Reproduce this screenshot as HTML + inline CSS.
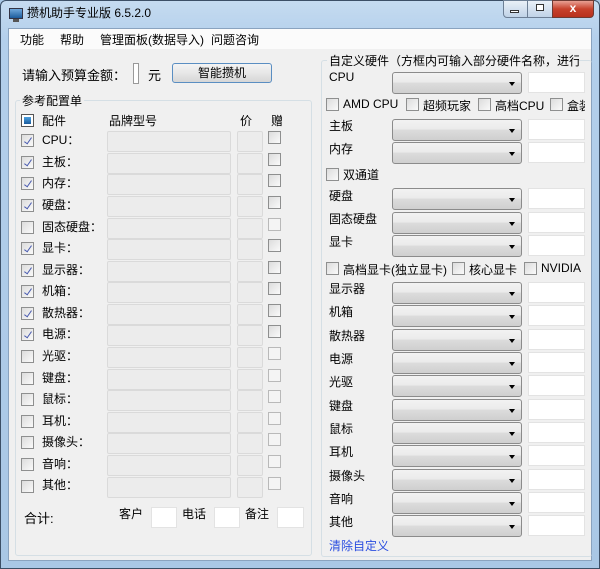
<!DOCTYPE html>
<html><head><meta charset="utf-8"><style>
*{margin:0;padding:0;box-sizing:border-box}
body{width:600px;height:569px;overflow:hidden;background:#a9c8e6;font-family:"Liberation Sans","Noto Sans CJK SC",sans-serif;font-size:12px;color:#000;position:relative}
.a{position:absolute}
.frame{left:0;top:0;width:600px;height:569px;background:linear-gradient(#c5dbf0,#b3cfeb 40px,#a9c7e5);border:1px solid #3c4f66;border-radius:6px 6px 0 0}
.client{left:8px;top:28px;width:584px;height:533px;background:#f0f0f0;border:1px solid #8aa3bf}
.menu{left:9px;top:29px;width:582px;height:20px;background:#fbfbfb}
.grp{border:1px solid #d5dfe5;border-radius:3px}
.lbl{background:#f0f0f0;padding:0 2px}
.cb{width:13px;height:13px;border:1px solid #8e8f8f;background:linear-gradient(135deg,#dcdcdc,#fafafa)}
.cb.d{border-color:#b9b9b9;background:#f4f4f4}
.cb.k::after{content:"";position:absolute;left:4px;top:1px;width:3px;height:7px;border:solid #4a5cb0;border-width:0 1.5px 1.5px 0;transform:rotate(35deg)}
.box{border:1px solid #dadada;background:#ececec;border-radius:2px}
.cmb{width:130px;height:22px;border:1px solid #8b8b8b;border-radius:3px;background:linear-gradient(#f2f2f2,#ebebeb 45%,#dcdcdc 50%,#cfcfcf)}
.cmb::after{content:"";position:absolute;right:6px;top:9px;border-left:3.5px solid transparent;border-right:3.5px solid transparent;border-top:4px solid #000}
.tb{width:57px;height:21px;background:#fff;border:1px solid #e3e3e3}
</style></head><body>
<div class="a frame"></div>
<div class="a" style="left:9px;top:8px;width:14px;height:11px;background:linear-gradient(#6fa8dc,#1c5c9c);border:1px solid #334"></div>
<div class="a" style="left:13px;top:19px;width:6px;height:3px;background:#555"></div>
<div class="a" style="left:27px;top:4px;font-size:12px">攒机助手专业版 6.5.2.0</div>
<div class="a" style="left:503px;top:0;width:25px;height:18px;background:linear-gradient(#e9f0f8,#c0d3e8);border:1px solid #6d7f95;border-radius:0 0 0 4px"></div>
<div class="a" style="left:510px;top:10px;width:9px;height:3px;border:1px solid #333;background:#fff"></div>
<div class="a" style="left:527px;top:0;width:26px;height:18px;background:linear-gradient(#e9f0f8,#c0d3e8);border:1px solid #6d7f95"></div>
<div class="a" style="left:536px;top:4px;width:8px;height:7px;border:1px solid #333;background:#fff"></div>
<div class="a" style="left:552px;top:0;width:42px;height:18px;background:linear-gradient(#e8a093,#c7412c 50%,#b8311d);border:1px solid #6d3a33;border-radius:0 0 4px 0;color:#fff;font-weight:bold;text-align:center;font-size:12px;line-height:15px">x</div>
<div class="a client"></div>
<div class="a menu"></div>
<div class="a" style="left:20px;top:31px">功能</div>
<div class="a" style="left:60px;top:31px">帮助</div>
<div class="a" style="left:100px;top:31px">管理面板(数据导入)</div>
<div class="a" style="left:211px;top:31px">问题咨询</div>
<div class="a" style="left:22px;top:65px;font-size:13px">请输入预算金额：</div>
<div class="a" style="left:133px;top:63px;width:6px;height:21px;border:1px solid #999;background:#fff"></div>
<div class="a" style="left:148px;top:65px;font-size:13px">元</div>
<div class="a" style="left:172px;top:63px;width:100px;height:20px;border:1px solid #5a8ec2;border-radius:3px;background:linear-gradient(#f4f4f4,#e7e7e7 50%,#d6d6d6);text-align:center;line-height:18px">智能攒机</div>

<div class="a grp" style="left:15px;top:100px;width:297px;height:456px"></div>
<div class="a lbl" style="left:20px;top:92px">参考配置单</div>
<div class="a cb" style="left:21px;top:114px;border-color:#555;background:#fff"><div class="a" style="left:2px;top:2px;width:7px;height:7px;background:linear-gradient(#4aa0e0,#1c5c9c)"></div></div>
<div class="a" style="left:42px;top:112px">配件</div>
<div class="a" style="left:109px;top:112px">品牌型号</div>
<div class="a" style="left:240px;top:112px">价</div>
<div class="a" style="left:271px;top:112px">赠</div>

<div class="a cb k" style="left:21px;top:134px"></div><div class="a" style="left:42px;top:131px">CPU：</div><div class="a box" style="left:107px;top:131px;width:124px;height:21px"></div><div class="a box" style="left:237px;top:131px;width:26px;height:21px"></div><div class="a cb" style="left:268px;top:131px"></div>
<div class="a cb k" style="left:21px;top:156px"></div><div class="a" style="left:42px;top:153px">主板：</div><div class="a box" style="left:107px;top:153px;width:124px;height:21px"></div><div class="a box" style="left:237px;top:153px;width:26px;height:21px"></div><div class="a cb" style="left:268px;top:153px"></div>
<div class="a cb k" style="left:21px;top:177px"></div><div class="a" style="left:42px;top:174px">内存：</div><div class="a box" style="left:107px;top:174px;width:124px;height:21px"></div><div class="a box" style="left:237px;top:174px;width:26px;height:21px"></div><div class="a cb" style="left:268px;top:174px"></div>
<div class="a cb k" style="left:21px;top:199px"></div><div class="a" style="left:42px;top:196px">硬盘：</div><div class="a box" style="left:107px;top:196px;width:124px;height:21px"></div><div class="a box" style="left:237px;top:196px;width:26px;height:21px"></div><div class="a cb" style="left:268px;top:196px"></div>
<div class="a cb" style="left:21px;top:221px"></div><div class="a" style="left:42px;top:218px">固态硬盘：</div><div class="a box" style="left:107px;top:218px;width:124px;height:21px"></div><div class="a box" style="left:237px;top:218px;width:26px;height:21px"></div><div class="a cb d" style="left:268px;top:218px"></div>
<div class="a cb k" style="left:21px;top:242px"></div><div class="a" style="left:42px;top:239px">显卡：</div><div class="a box" style="left:107px;top:239px;width:124px;height:21px"></div><div class="a box" style="left:237px;top:239px;width:26px;height:21px"></div><div class="a cb" style="left:268px;top:239px"></div>
<div class="a cb k" style="left:21px;top:264px"></div><div class="a" style="left:42px;top:261px">显示器：</div><div class="a box" style="left:107px;top:261px;width:124px;height:21px"></div><div class="a box" style="left:237px;top:261px;width:26px;height:21px"></div><div class="a cb" style="left:268px;top:261px"></div>
<div class="a cb k" style="left:21px;top:285px"></div><div class="a" style="left:42px;top:282px">机箱：</div><div class="a box" style="left:107px;top:282px;width:124px;height:21px"></div><div class="a box" style="left:237px;top:282px;width:26px;height:21px"></div><div class="a cb" style="left:268px;top:282px"></div>
<div class="a cb k" style="left:21px;top:307px"></div><div class="a" style="left:42px;top:304px">散热器：</div><div class="a box" style="left:107px;top:304px;width:124px;height:21px"></div><div class="a box" style="left:237px;top:304px;width:26px;height:21px"></div><div class="a cb" style="left:268px;top:304px"></div>
<div class="a cb k" style="left:21px;top:328px"></div><div class="a" style="left:42px;top:325px">电源：</div><div class="a box" style="left:107px;top:325px;width:124px;height:21px"></div><div class="a box" style="left:237px;top:325px;width:26px;height:21px"></div><div class="a cb" style="left:268px;top:325px"></div>
<div class="a cb" style="left:21px;top:350px"></div><div class="a" style="left:42px;top:347px">光驱：</div><div class="a box" style="left:107px;top:347px;width:124px;height:21px"></div><div class="a box" style="left:237px;top:347px;width:26px;height:21px"></div><div class="a cb d" style="left:268px;top:347px"></div>
<div class="a cb" style="left:21px;top:372px"></div><div class="a" style="left:42px;top:369px">键盘：</div><div class="a box" style="left:107px;top:369px;width:124px;height:21px"></div><div class="a box" style="left:237px;top:369px;width:26px;height:21px"></div><div class="a cb d" style="left:268px;top:369px"></div>
<div class="a cb" style="left:21px;top:393px"></div><div class="a" style="left:42px;top:390px">鼠标：</div><div class="a box" style="left:107px;top:390px;width:124px;height:21px"></div><div class="a box" style="left:237px;top:390px;width:26px;height:21px"></div><div class="a cb d" style="left:268px;top:390px"></div>
<div class="a cb" style="left:21px;top:415px"></div><div class="a" style="left:42px;top:412px">耳机：</div><div class="a box" style="left:107px;top:412px;width:124px;height:21px"></div><div class="a box" style="left:237px;top:412px;width:26px;height:21px"></div><div class="a cb d" style="left:268px;top:412px"></div>
<div class="a cb" style="left:21px;top:436px"></div><div class="a" style="left:42px;top:433px">摄像头：</div><div class="a box" style="left:107px;top:433px;width:124px;height:21px"></div><div class="a box" style="left:237px;top:433px;width:26px;height:21px"></div><div class="a cb d" style="left:268px;top:433px"></div>
<div class="a cb" style="left:21px;top:458px"></div><div class="a" style="left:42px;top:455px">音响：</div><div class="a box" style="left:107px;top:455px;width:124px;height:21px"></div><div class="a box" style="left:237px;top:455px;width:26px;height:21px"></div><div class="a cb d" style="left:268px;top:455px"></div>
<div class="a cb" style="left:21px;top:480px"></div><div class="a" style="left:42px;top:476px">其他：</div><div class="a box" style="left:107px;top:477px;width:124px;height:21px"></div><div class="a box" style="left:237px;top:477px;width:26px;height:21px"></div><div class="a cb d" style="left:268px;top:477px"></div>

<div class="a" style="left:24px;top:508px;font-size:13px">合计:</div>
<div class="a" style="left:119px;top:505px">客户</div><div class="a" style="left:151px;top:507px;width:26px;height:21px;background:#fff;border:1px solid #e3e3e3"></div>
<div class="a" style="left:182px;top:505px">电话</div><div class="a" style="left:214px;top:507px;width:26px;height:21px;background:#fff;border:1px solid #e3e3e3"></div>
<div class="a" style="left:245px;top:505px">备注</div><div class="a" style="left:277px;top:507px;width:27px;height:21px;background:#fff;border:1px solid #e3e3e3"></div>

<div class="a grp" style="left:321px;top:60px;width:271px;height:497px;border-right:none"></div>
<div class="a lbl" style="left:327px;top:52px;white-space:nowrap;width:252px;overflow:hidden">自定义硬件（方框内可输入部分硬件名称，进行筛选）</div>
<div class="a" style="left:329px;top:70px">CPU</div><div class="a cmb" style="left:392px;top:72px"></div><div class="a tb" style="left:528px;top:72px"></div>
<div class="a cb" style="left:326px;top:98px"></div><div class="a" style="left:343px;top:97px">AMD CPU</div>
<div class="a cb" style="left:406px;top:98px"></div><div class="a" style="left:423px;top:97px">超频玩家</div>
<div class="a cb" style="left:478px;top:98px"></div><div class="a" style="left:495px;top:97px">高档CPU</div>
<div class="a cb" style="left:550px;top:98px"></div><div class="a" style="left:567px;top:97px;width:18px;overflow:hidden;white-space:nowrap">盒装</div>
<div class="a" style="left:329px;top:117px">主板</div><div class="a cmb" style="left:392px;top:119px"></div><div class="a tb" style="left:528px;top:119px"></div>
<div class="a" style="left:329px;top:140px">内存</div><div class="a cmb" style="left:392px;top:142px"></div><div class="a tb" style="left:528px;top:142px"></div>
<div class="a cb" style="left:326px;top:168px"></div><div class="a" style="left:343px;top:166px">双通道</div>
<div class="a" style="left:329px;top:187px">硬盘</div><div class="a cmb" style="left:392px;top:188px"></div><div class="a tb" style="left:528px;top:188px"></div>
<div class="a" style="left:329px;top:210px">固态硬盘</div><div class="a cmb" style="left:392px;top:212px"></div><div class="a tb" style="left:528px;top:212px"></div>
<div class="a" style="left:329px;top:233px">显卡</div><div class="a cmb" style="left:392px;top:235px"></div><div class="a tb" style="left:528px;top:235px"></div>
<div class="a cb" style="left:326px;top:262px"></div><div class="a" style="left:343px;top:261px">高档显卡(独立显卡)</div>
<div class="a cb" style="left:452px;top:262px"></div><div class="a" style="left:469px;top:261px">核心显卡</div>
<div class="a cb" style="left:524px;top:262px"></div><div class="a" style="left:541px;top:261px">NVIDIA</div>
<div class="a" style="left:329px;top:280px">显示器</div><div class="a cmb" style="left:392px;top:282px"></div><div class="a tb" style="left:528px;top:282px"></div>
<div class="a" style="left:329px;top:303px">机箱</div><div class="a cmb" style="left:392px;top:305px"></div><div class="a tb" style="left:528px;top:305px"></div>
<div class="a" style="left:329px;top:327px">散热器</div><div class="a cmb" style="left:392px;top:329px"></div><div class="a tb" style="left:528px;top:329px"></div>
<div class="a" style="left:329px;top:350px">电源</div><div class="a cmb" style="left:392px;top:352px"></div><div class="a tb" style="left:528px;top:352px"></div>
<div class="a" style="left:329px;top:373px">光驱</div><div class="a cmb" style="left:392px;top:375px"></div><div class="a tb" style="left:528px;top:375px"></div>
<div class="a" style="left:329px;top:397px">键盘</div><div class="a cmb" style="left:392px;top:399px"></div><div class="a tb" style="left:528px;top:399px"></div>
<div class="a" style="left:329px;top:420px">鼠标</div><div class="a cmb" style="left:392px;top:422px"></div><div class="a tb" style="left:528px;top:422px"></div>
<div class="a" style="left:329px;top:443px">耳机</div><div class="a cmb" style="left:392px;top:445px"></div><div class="a tb" style="left:528px;top:445px"></div>
<div class="a" style="left:329px;top:467px">摄像头</div><div class="a cmb" style="left:392px;top:469px"></div><div class="a tb" style="left:528px;top:469px"></div>
<div class="a" style="left:329px;top:490px">音响</div><div class="a cmb" style="left:392px;top:492px"></div><div class="a tb" style="left:528px;top:492px"></div>
<div class="a" style="left:329px;top:513px">其他</div><div class="a cmb" style="left:392px;top:515px"></div><div class="a tb" style="left:528px;top:515px"></div>
<div class="a" style="left:329px;top:537px;color:#2b4ee0">清除自定义</div>
</body></html>
